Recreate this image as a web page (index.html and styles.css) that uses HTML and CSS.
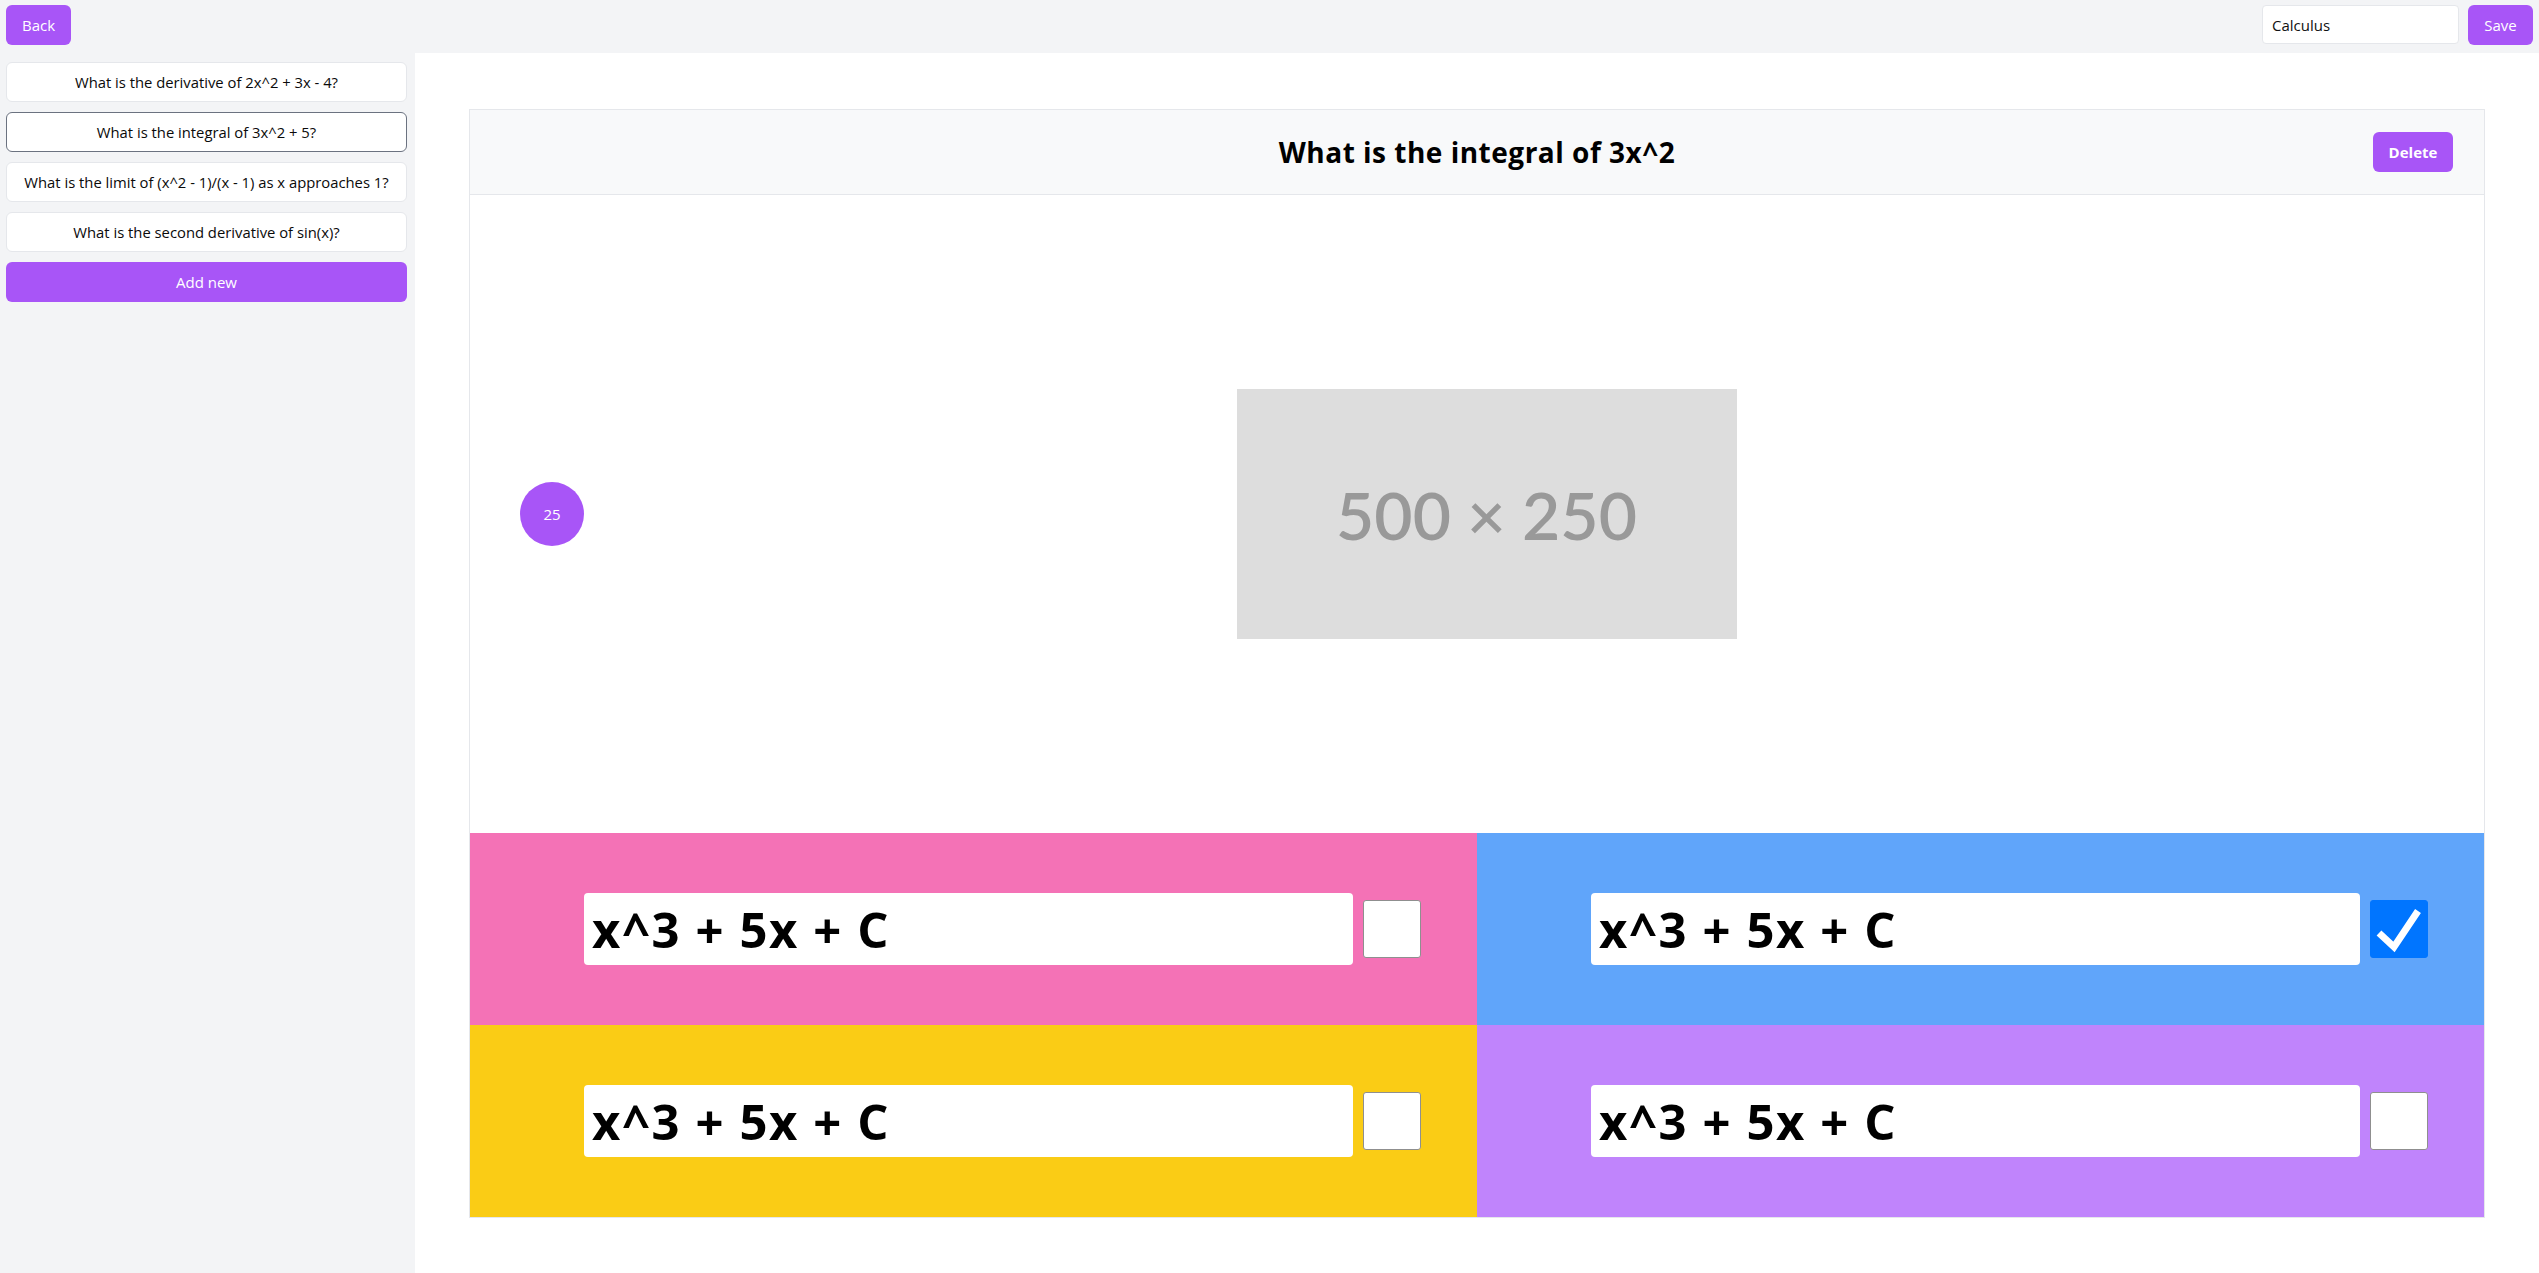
FILE: index.html
```html
<!DOCTYPE html>
<html lang="en">
<head>
<meta charset="utf-8">
<title>Quiz editor</title>
<link rel="stylesheet" href="styles.css">
</head>
<body>
<div class="app">
  <header class="topbar">
    <button class="btn btn-back">Back</button>
    <div class="topbar-right">
      <div class="title-input">Calculus</div>
      <button class="btn btn-save">Save</button>
    </div>
  </header>
  <div class="layout">
    <aside class="sidebar">
      <div class="q-item">What is the derivative of 2x^2 + 3x - 4?</div>
      <div class="q-item q-item-active">What is the integral of 3x^2 + 5?</div>
      <div class="q-item">What is the limit of (x^2 - 1)/(x - 1) as x approaches 1?</div>
      <div class="q-item">What is the second derivative of sin(x)?</div>
      <button class="btn btn-add">Add new</button>
    </aside>
    <main class="main">
      <section class="card">
        <div class="card-header">
          <div class="header-spacer"></div>
          <h1 class="question-title">What is the integral of 3x^2</h1>
          <div class="header-actions"><button class="btn btn-delete">Delete</button></div>
        </div>
        <div class="card-body">
          <div class="timer">25</div>
          <div class="media-wrap">
            <div class="placeholder">500 × 250</div>
          </div>
        </div>
        <div class="answers">
          <div class="answer answer-pink">
            <div class="answer-input">x^3 + 5x + C</div>
            <span class="check"></span>
          </div>
          <div class="answer answer-blue">
            <div class="answer-input">x^3 + 5x + C</div>
            <span class="check check-on"><svg viewBox="0 0 58 58" width="58" height="58"><polyline points="9,33 24,47 48,11" fill="none" stroke="#fff" stroke-width="7"/></svg></span>
          </div>
          <div class="answer answer-yellow">
            <div class="answer-input">x^3 + 5x + C</div>
            <span class="check"></span>
          </div>
          <div class="answer answer-purple">
            <div class="answer-input">x^3 + 5x + C</div>
            <span class="check"></span>
          </div>
        </div>
      </section>
    </main>
  </div>
</div>
</body>
</html>
```

FILE: styles.css
```css
* { box-sizing: border-box; }
html, body { margin: 0; padding: 0; }
body {
  font-family: "Open Sans", "Noto Sans", sans-serif;
  background: #f3f4f6;
  color: #111;
}
.app { width: 2539px; height: 1273px; display: flex; flex-direction: column; }

.topbar {
  height: 53px;
  flex: 0 0 53px;
  display: flex;
  justify-content: space-between;
  align-items: flex-start;
  padding: 5px 6px 0 6px;
}
.topbar-right { display: flex; gap: 9px; align-items: flex-start; }

.btn {
  font-family: inherit;
  border: none;
  background: #a855f7;
  color: #fff;
  border-radius: 6px;
  font-size: 15px;
  cursor: pointer;
}
.btn-back, .btn-save { width: 65px; height: 40px; padding: 0; }
.title-input {
  width: 197px;
  height: 39px;
  background: #fff;
  border: 1px solid #e5e7eb;
  border-radius: 4px;
  font-size: 15px;
  padding: 0 9px;
  display: flex;
  align-items: center;
  color: #111;
}

.layout { flex: 1; display: flex; min-height: 0; }
.sidebar {
  width: 415px;
  flex: 0 0 415px;
  padding: 9px 8px 0 6px;
  display: flex;
  flex-direction: column;
  gap: 10px;
}
.q-item {
  height: 40px;
  background: #fff;
  border: 1px solid #e5e7eb;
  border-radius: 6px;
  display: flex;
  align-items: center;
  justify-content: center;
  font-size: 14.8px;
  white-space: nowrap;
  color: #0a0a0a;
}
.q-item-active { border-color: #6b7280; }
.btn-add { height: 40px; width: 100%; }

.main {
  flex: 1;
  background: #fff;
  padding: 56px 54px 0 54px;
}
.card {
  border: 1px solid #e5e7eb;
  display: flex;
  flex-direction: column;
}
.card-header {
  display: grid;
  grid-template-columns: 1fr auto 1fr;
  align-items: center;
  padding: 22px 31px;
  background: #f8f9fa;
  border-bottom: 1px solid #e5e7eb;
}
.question-title {
  margin: 0;
  font-size: 28px;
  letter-spacing: 0.5px;
  font-weight: 700;
  color: #000;
  line-height: 40px;
}
.header-actions { display: flex; justify-content: flex-end; }
.btn-delete { width: 80px; height: 40px; font-weight: 700; font-size: 15px; padding: 0; }

.card-body {
  height: 638px;
  display: flex;
  align-items: center;
  padding: 0 95px 0 50px;
}
.timer {
  width: 64px;
  height: 64px;
  border-radius: 50%;
  background: #a855f7;
  color: #fff;
  font-size: 15px;
  display: flex;
  align-items: center;
  justify-content: center;
  flex: 0 0 64px;
}
.media-wrap { flex: 1; display: flex; justify-content: center; }
.placeholder {
  width: 500px;
  height: 250px;
  background: #dddddd;
  color: #999999;
  font-family: "Lato", "Open Sans", sans-serif;
  font-weight: 600;
  font-size: 66px;
  display: flex;
  align-items: center;
  justify-content: center;
}

.answers {
  display: grid;
  grid-template-columns: 1fr 1fr;
  grid-auto-rows: 192px;
}
.answer {
  display: flex;
  align-items: center;
  gap: 10px;
  padding: 0 56px 0 114px;
}
.answer-pink { background: #f472b6; }
.answer-blue { background: #60a5fa; }
.answer-yellow { background: #facc15; }
.answer-purple { background: #c084fc; }
.answer-input {
  flex: 1;
  height: 72px;
  background: #fff;
  border-radius: 4px;
  font-size: 49px;
  letter-spacing: 1.6px;
  font-weight: 700;
  color: #000;
  padding-left: 8px;
  display: flex;
  align-items: center;
  white-space: nowrap;
}
.check {
  width: 58px;
  height: 58px;
  flex: 0 0 58px;
  background: #fff;
  border: 1px solid #8f8f8f;
  border-radius: 3px;
  display: block;
}
.check-on {
  background: #0075ff;
  border-color: #0075ff;
  position: relative;
}
.check-on svg { position: absolute; left: -1px; top: -1px; }
```
